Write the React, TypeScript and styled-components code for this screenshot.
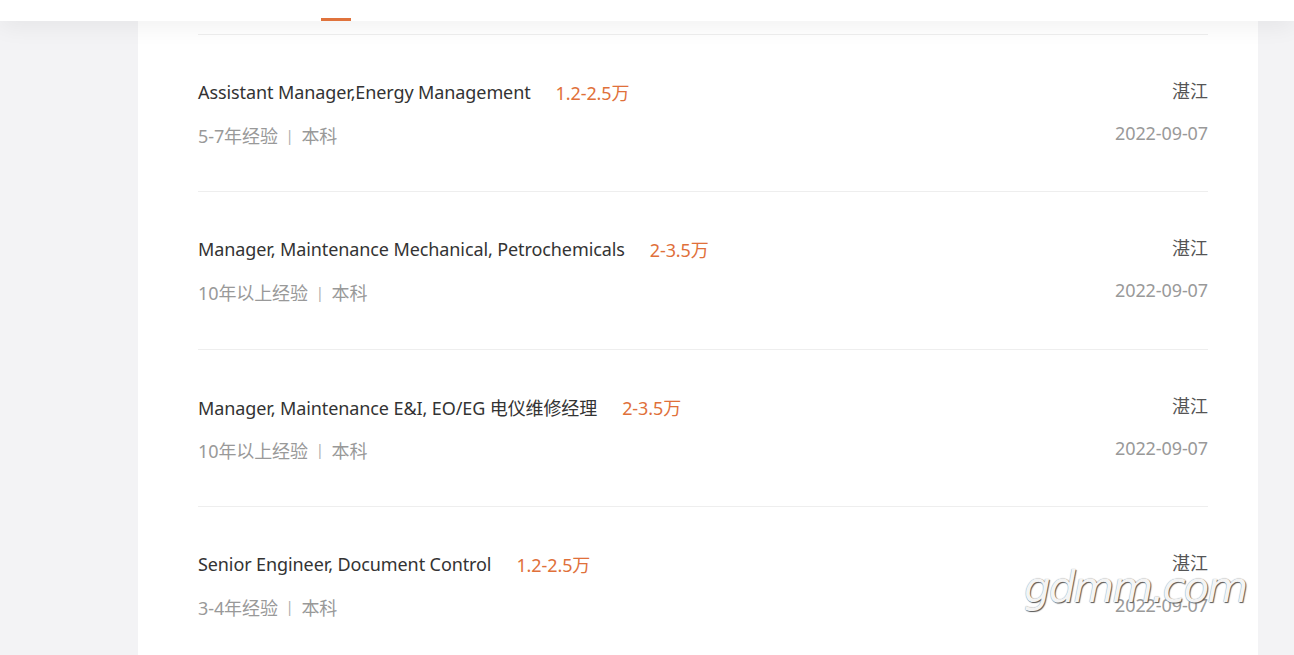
import React from "react";
import styled, { createGlobalStyle } from "styled-components";

const Global = createGlobalStyle`
  html, body { margin: 0; padding: 0; background: #f3f3f5; }
  body { font-family: "Noto Sans", "Noto Sans CJK SC", sans-serif; overflow: hidden; }
`;

const Page = styled.div`
  position: relative;
  width: 1294px;
  height: 655px;
  overflow: hidden;
  background: #f3f3f5;
`;

const TopBar = styled.div`
  position: relative;
  z-index: 2;
  height: 21px;
  background: #fff;
  box-shadow: 0 4px 24px rgba(0, 0, 0, 0.07);
`;

const Indicator = styled.div`
  position: absolute;
  left: 321px;
  bottom: 0;
  width: 30px;
  height: 3px;
  background: #e0733c;
`;

const Card = styled.div`
  margin-left: 138px;
  width: 1120px;
  background: #fff;
  padding: 13px 50px 0 60px;
  box-sizing: border-box;
  height: 634px;
`;

const Row = styled.div`
  display: flex;
  justify-content: space-between;
  border-top: 1px solid #eeeeee;
  padding: 43px 0 42px;
  height: 157.33px;
  box-sizing: border-box;
`;

const Left = styled.div`
  display: flex;
  flex-direction: column;
  gap: 17px;
`;

const TitleLine = styled.div`
  display: flex;
  align-items: center;
  height: 26px;
  padding-top: 1px;
`;

const Title = styled.span`
  font-size: 18px;
  letter-spacing: -0.1px;
  color: #333;
`;

const Salary = styled.span`
  margin-left: 25px;
  font-size: 18px;
  letter-spacing: -0.1px;
  color: #e0703a;
`;

const Meta = styled.div`
  display: flex;
  align-items: center;
  height: 26px;
  font-size: 18px;
  letter-spacing: -0.1px;
  color: #999;
`;

const Sep = styled.span`
  margin: 0 8px;
  font-size: 14px;
  color: #aaa;
`;

const Right = styled.div`
  display: flex;
  flex-direction: column;
  align-items: flex-end;
  gap: 16px;
`;

const City = styled.span`
  font-size: 18px;
  line-height: 26px;
  color: #555;
`;

const DateText = styled.span`
  font-size: 18px;
  line-height: 26px;
  letter-spacing: -0.1px;
  color: #999;
`;

const Watermark = styled.div`
  position: absolute;
  left: 1024px;
  top: 563px;
  font-family: "DejaVu Sans", sans-serif;
  font-style: italic;
  font-size: 42px;
  letter-spacing: -2px;
  color: #f4f4f4;
  text-shadow: 1px 1px 1px #555, 0 0 1px #888;
  z-index: 3;
`;

const jobs = [
  { title: "Assistant Manager,Energy Management", salary: "1.2-2.5万", exp: "5-7年经验", edu: "本科" },
  { title: "Manager, Maintenance Mechanical, Petrochemicals", salary: "2-3.5万", exp: "10年以上经验", edu: "本科" },
  { title: "Manager, Maintenance E&I, EO/EG 电仪维修经理", salary: "2-3.5万", exp: "10年以上经验", edu: "本科" },
  { title: "Senior Engineer, Document Control", salary: "1.2-2.5万", exp: "3-4年经验", edu: "本科" },
];

export default function App() {
  return (
    <Page>
      <Global />
      <TopBar>
        <Indicator />
      </TopBar>
      <Card>
        {jobs.map((j, i) => (
          <Row key={i}>
            <Left>
              <TitleLine>
                <Title>{j.title}</Title>
                <Salary>{j.salary}</Salary>
              </TitleLine>
              <Meta>
                {j.exp}
                <Sep>|</Sep>
                {j.edu}
              </Meta>
            </Left>
            <Right>
              <City>湛江</City>
              <DateText>2022-09-07</DateText>
            </Right>
          </Row>
        ))}
      </Card>
      <Watermark>gdmm.com</Watermark>
    </Page>
  );
}
